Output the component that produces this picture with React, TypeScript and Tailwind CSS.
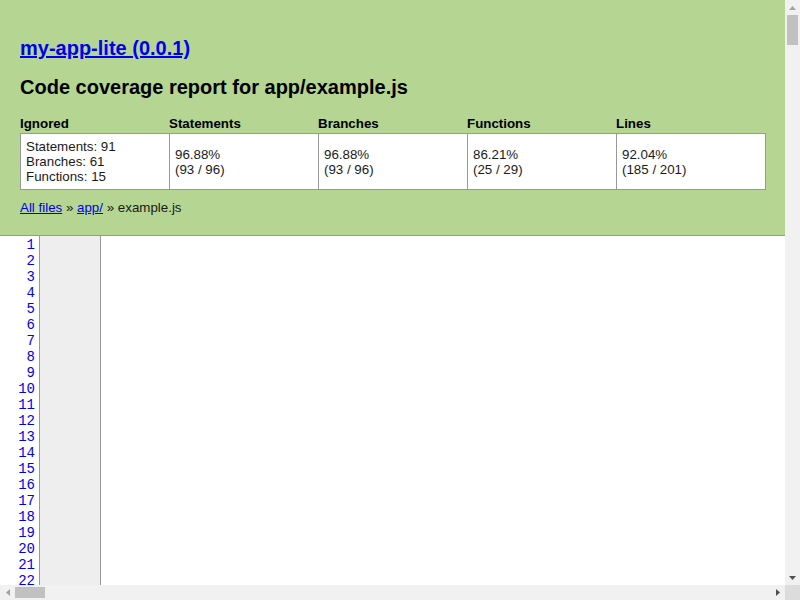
import React from "react";

const VISIBLE_LINES = 23;

const cols = [
  { label: "Ignored" },
  { label: "Statements", pct: "96.88%", frac: "(93 / 96)" },
  { label: "Branches", pct: "96.88%", frac: "(93 / 96)" },
  { label: "Functions", pct: "86.21%", frac: "(25 / 29)" },
  { label: "Lines", pct: "92.04%", frac: "(185 / 201)" },
];

function Arrow({ dir, dark }: { dir: "up" | "down" | "left" | "right"; dark?: boolean }) {
  const pts = {
    up: "0,4 3.5,0 7,4",
    down: "0,0 7,0 3.5,4",
    left: "4,0 4,7 0,3.5",
    right: "0,0 0,7 4,3.5",
  }[dir];
  const vertical = dir === "up" || dir === "down";
  return (
    <svg width={vertical ? 7 : 4} height={vertical ? 4 : 7} viewBox={vertical ? "0 0 7 4" : "0 0 4 7"}>
      <polygon points={pts} fill={dark ? "#505050" : "#a3a3a3"} />
    </svg>
  );
}

export default function App() {
  const lines = Array.from({ length: VISIBLE_LINES }, (_, i) => i + 1);

  return (
    <div className="w-[800px] h-[600px] flex flex-col overflow-hidden bg-white font-['Liberation_Sans',Arial,sans-serif] text-[13.33px] text-[#1a1a1a]">
      <div className="flex flex-1 min-h-0">
        {/* Page */}
        <div className="flex-1 min-w-0 flex flex-col overflow-hidden">
          {/* Header */}
          <div className="bg-[#b5d592] px-5 pt-[36px] pb-[19px]">
            <h1 className="text-[20px] leading-[24px] font-bold">
              <a href="#" className="text-[#0000ee] underline">my-app-lite (0.0.1)</a>
            </h1>
            <h2 className="mt-[15px] text-[20px] leading-[24px] font-bold text-black">
              Code coverage report for app/example.js
            </h2>

            <div className="mt-4 w-[745px]">
              <div className="grid grid-cols-5 font-bold text-black leading-[15px] pt-[1px] pb-[2px]">
                {cols.map((c) => (
                  <div key={c.label}>{c.label}</div>
                ))}
              </div>
              <div className="w-[746px] border border-[#999] bg-white grid grid-cols-[148px_149px_149px_149px_149px] leading-[15px]">
                <div className="p-[5px]">
                  <div>Statements: 91</div>
                  <div>Branches: 61</div>
                  <div>Functions: 15</div>
                </div>
                {cols.slice(1).map((c) => (
                  <div key={c.label} className="border-l border-[#999] px-[5px] flex flex-col justify-center">
                    <div>{c.pct}</div>
                    <div>{c.frac}</div>
                  </div>
                ))}
              </div>
            </div>

            <div className="mt-[10px] leading-[16px]">
              <a href="#" className="text-[#0000ee] underline">All files</a>
              {" » "}
              <a href="#" className="text-[#0000ee] underline">app/</a>
              {" » example.js"}
            </div>
          </div>

          {/* Source listing */}
          <div className="flex-1 flex border-t border-[#999]">
            <div className="w-[40px] border-r border-[#999] pt-[1px] pr-[4px] text-right font-['Liberation_Mono',monospace] text-[14px] leading-[16px]">
              {lines.map((n) => (
                <div key={n}>
                  <a href={`#L${n}`} className="text-[#0000ee] no-underline">{n}</a>
                </div>
              ))}
            </div>
            <div className="w-[61px] bg-[#eee] border-r border-[#999]" />
            <div className="flex-1 bg-white" />
          </div>
        </div>

        {/* Vertical scrollbar */}
        <div className="w-[15px] bg-[#f1f1f1] flex flex-col items-center">
          <div className="h-[15px] flex items-center justify-center">
            <Arrow dir="up" />
          </div>
          <div className="w-[11px] h-[30px] bg-[#c1c1c1]" />
          <div className="flex-1" />
          <div className="h-[15px] flex items-center justify-center">
            <Arrow dir="down" dark />
          </div>
        </div>
      </div>

      {/* Horizontal scrollbar */}
      <div className="h-[15px] flex">
        <div className="flex-1 bg-[#f1f1f1] flex items-center">
          <div className="w-[15px] flex justify-center">
            <Arrow dir="left" />
          </div>
          <div className="w-[30px] h-[11px] bg-[#c1c1c1]" />
          <div className="flex-1" />
          <div className="w-[15px] flex justify-center">
            <Arrow dir="right" dark />
          </div>
        </div>
        <div className="w-[15px] bg-[#dcdcdc]" />
      </div>
    </div>
  );
}
